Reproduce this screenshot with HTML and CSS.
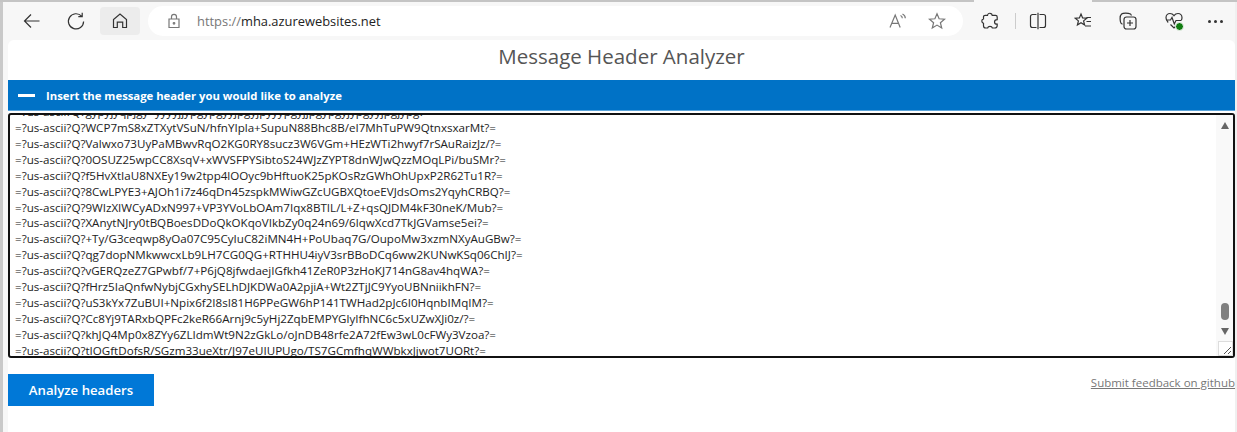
FILE: index.html
```html
<!DOCTYPE html>
<html lang="en">
<head>
<meta charset="utf-8">
<title>Message Header Analyzer</title>
<link rel="stylesheet" href="styles.css">
</head>
<body>
<div class="tabstrip"><span class="tab-gap"></span></div>
<div class="window">
  <header class="toolbar">
    <button class="tool back"><svg width="20" height="20" viewBox="0 0 20 20"><path d="M17.500 10H2.500M9 3.500 2.500 10 9 16.500"/></svg></button>
    <button class="tool reload"><svg width="20" height="20" viewBox="0 0 20 20"><path d="M15.600 5.200A7.600 7.600 0 1 0 17.600 10.500M16.200 1.800v3.900h-3.900"/></svg></button>
    <button class="tool home"><svg width="18" height="18" viewBox="0 0 18 18"><path d="M2.500 15.500V7.600L9 2l6.500 5.600v7.900h-3.800v-5.300H6.300v5.300z"/></svg></button>
    <div class="address">
      <svg class="lock" width="14" height="16" viewBox="0 0 14 16"><path d="M2 6h10v8.500H2zM4.500 6V3.800a2.500 2.500 0 0 1 5 0V6"/><circle cx="7" cy="10.300" r=".8"/></svg>
      <span class="url"><span class="scheme">https://</span>mha.azurewebsites.net</span>
      <svg class="read" width="18" height="16" viewBox="0 0 18 16"><path d="M1 14.500 6.200 2l5 12.500M2.800 10.300h7M11.500 2.500c1.100.5 1.800 1.500 1.800 2.700M13.500 1c1.700.9 2.800 2.400 2.800 4.300"/></svg>
      <svg class="star" width="18" height="18" viewBox="0 0 18 18"><path d="M9 1.800 11.100 6.800l5.400.4-4.100 3.500 1.300 5.300L9 13.100 4.300 16l1.300-5.300L1.500 7.200l5.400-.4z"/></svg>
    </div>
    <div class="tools-right">
      <svg class="ext" width="18" height="18" viewBox="0 0 18 18"><path d="M6.500 3.300C6.700 1.800 8 1 9.300 1.300c1 .2 1.800 1 1.900 2h3.300c1 0 1.700.7 1.700 1.700v2.600c-1.600 0-2.700 1-2.700 2.300s1.100 2.300 2.700 2.300v1.300c0 1.400-1 2.500-2.500 2.500h-2.300c-.3-1.100-1.200-1.700-2.400-1.700s-2.100.6-2.400 1.700H4.800c-1.400 0-2.300-1-2.300-2.300v-2.300C1.400 11.100.8 10.200.8 9.100s.7-2 1.700-2.200V5c0-1 .7-1.700 1.700-1.700z"/></svg>
      <span class="divider"></span>
      <svg class="split" width="18" height="18" viewBox="0 0 18 18"><path d="M7.500 2.500h-4A2 2 0 0 0 1.500 4.500v9a2 2 0 0 0 2 2h4M10.500 2.500h4a2 2 0 0 1 2 2v9a2 2 0 0 1-2 2h-4M9 .8v16.400"/></svg>
      <svg class="favs" width="18" height="18" viewBox="0 0 18 18"><path d="M7 2 8.600 5.900l4.200.3-3.200 2.700 1 4.100L7 10.800 3.400 13l1-4.100L1.200 6.200l4.200-.3zM12.500 5.500h4.500M12.500 9.500h4.500M11 14h6"/></svg>
      <svg class="colls" width="18" height="18" viewBox="0 0 18 18"><path d="M12.500 3.500 11.500 2C9 .8 4 .8 2.600 2 1 3.500 1 7.500 1.500 10c.2 1 .8 1.800 2 2.300"/><rect x="5" y="5" width="12" height="12" rx="2.500"/><path d="M11 8v6M8 11h6"/></svg>
      <span class="health">
        <svg width="18" height="18" viewBox="0 0 18 18"><path d="M3.200 10.500C1.800 9 1 7.400 1 5.700 1 3.300 2.800 1.500 5 1.500c1.700 0 3 .8 4 2.200 1-1.400 2.300-2.200 4-2.200 2.200 0 4 1.800 4 4.200 0 1-.3 1.900-.8 2.800M1 8h4.500l1.500-2.500 2.300 6.500L11 8.500h5M5.500 12.500 9 16l1.500-1.500"/></svg>
        <i class="health-dot"></i>
      </span>
      <span class="more"><i></i><i></i><i></i></span>
    </div>
  </header>
  <main class="page">
    <h1 class="title">Message Header Analyzer</h1>
    <div class="bar"><span class="minus"></span><span class="bar-text">Insert the message header you would like to analyze</span></div>
    <div class="input">
      <div class="viewport">
        <div class="lines">
          <div>=?us-ascii?Q?gypyjyqpjgy+yyyyjjypgypgyyjpgyjpyyypgyjjpgypgyjypgyyjpgjypg?=</div>
          <div>=?us-ascii?Q?WCP7mS8xZTXytVSuN/hfnYIpla+SupuN88Bhc8B/eI7MhTuPW9QtnxsxarMt?=</div>
          <div>=?us-ascii?Q?Valwxo73UyPaMBwvRqO2KG0RY8sucz3W6VGm+HEzWTi2hwyf7rSAuRaizJz/?=</div>
          <div>=?us-ascii?Q?0OSUZ25wpCC8XsqV+xWVSFPYSibtoS24WJzZYPT8dnWJwQzzMOqLPi/buSMr?=</div>
          <div>=?us-ascii?Q?f5HvXtIaU8NXEy19w2tpp4lOOyc9bHftuoK25pKOsRzGWhOhUpxP2R62Tu1R?=</div>
          <div>=?us-ascii?Q?8CwLPYE3+AJOh1i7z46qDn45zspkMWiwGZcUGBXQtoeEVJdsOms2YqyhCRBQ?=</div>
          <div>=?us-ascii?Q?9WIzXIWCyADxN997+VP3YVoLbOAm7Iqx8BTIL/L+Z+qsQJDM4kF30neK/Mub?=</div>
          <div>=?us-ascii?Q?XAnytNJry0tBQBoesDDoQkOKqoVIkbZy0q24n69/6lqwXcd7TkJGVamse5ei?=</div>
          <div>=?us-ascii?Q?+Ty/G3ceqwp8yOa07C95CyIuC82iMN4H+PoUbaq7G/OupoMw3xzmNXyAuGBw?=</div>
          <div>=?us-ascii?Q?qg7dopNMkwwcxLb9LH7CG0QG+RTHHU4iyV3srBBoDCq6ww2KUNwKSq06ChIJ?=</div>
          <div>=?us-ascii?Q?vGERQzeZ7GPwbf/7+P6jQ8jfwdaejIGfkh41ZeR0P3zHoKJ714nG8av4hqWA?=</div>
          <div>=?us-ascii?Q?fHrz5IaQnfwNybjCGxhySELhDJKDWa0A2pjiA+Wt2ZTjJC9YyoUBNniikhFN?=</div>
          <div>=?us-ascii?Q?uS3kYx7ZuBUI+Npix6f2I8sI81H6PPeGW6hP141TWHad2pJc6I0HqnbIMqIM?=</div>
          <div>=?us-ascii?Q?Cc8Yj9TARxbQPFc2keR66Arnj9c5yHj2ZqbEMPYGlyIfhNC6c5xUZwXJi0z/?=</div>
          <div>=?us-ascii?Q?khJQ4Mp0x8ZYy6ZLIdmWt9N2zGkLo/oJnDB48rfe2A72fEw3wL0cFWy3Vzoa?=</div>
          <div>=?us-ascii?Q?tIOGftDofsR/SGzm33ueXtr/J97eUIUPUgo/TS7GCmfhqWWbkxJjwot7UORt?=</div>
        </div>
      </div>
      <div class="scrollbar">
        <i class="arrow up"></i>
        <span class="track"><i class="thumb"></i></span>
        <i class="arrow down"></i>
        <span class="grip"><svg width="13" height="13" viewBox="0 0 13 13"><path d="M12 5 5 12M12 9 9 12"/></svg></span>
      </div>
    </div>
    <div class="actions">
      <button class="analyze">Analyze headers</button>
      <a class="feedback" href="#">Submit feedback on github</a>
    </div>
  </main>
</div>
</body>
</html>
```
FILE: styles.css
```css
* { box-sizing: border-box; }
html, body { margin: 0; height: 100%; overflow: hidden; }
body { background: #f7f7f7; font-family: "Open Sans", "Noto Sans", sans-serif; display: flex; flex-direction: column; width: 1237px; height: 432px; }
.tabstrip { height: 2px; background: #c4c4c4; display: flex; justify-content: flex-end; flex: none; }
.tab-gap { width: 118px; margin-right: 145px; background: #f7f7f7; }
.window { flex: 1; display: flex; flex-direction: column; min-height: 0; border-left: 3px solid #c9c9c9; border-right: 2px solid #f0f0f0; }
.toolbar { height: 38px; flex: none; display: flex; align-items: center; position: relative; }
.tool { border: 0; background: none; padding: 0; display: flex; align-items: center; justify-content: center; border-radius: 4px; }
.tool svg, .tools-right svg, .address svg { fill: none; stroke: #333; stroke-width: 1.2; }
.tool.back { width: 20px; height: 20px; margin-left: 19px; }
.tool.reload { width: 20px; height: 20px; margin-left: 24px; }
.tool.home { width: 40px; height: 28px; margin-left: 14px; background: #ececec; }
.address { width: 815px; height: 30px; margin-left: 8px; background: #fff; border-radius: 15px; display: flex; align-items: center; padding-left: 19px; }
.address .lock, .address .read, .address .star { stroke: #777; }
.url { margin-left: 16px; font-size: 12.9px; color: #222; }
.scheme { color: #777; }
.read { margin-left: auto; }
.star { margin-left: 21px; margin-right: 17px; }
.tools-right { display: flex; align-items: center; margin-left: 18px; flex: 1; }
.divider { width: 1px; height: 16px; background: #ccc; margin: 0 13px 0 16px; }
.favs { margin-left: 27px; }
.colls { margin-left: 27px; }
.health { margin-left: 28px; position: relative; display: flex; }
.health-dot { position: absolute; right: -1px; bottom: -1px; width: 7px; height: 7px; border-radius: 50%; background: #107c10; border: 1px solid #f7f7f7; box-sizing: content-box; }
.more { display: flex; gap: 3px; margin-left: 25px; }
.more i { width: 3px; height: 3px; border-radius: 50%; background: #333; }
.page { flex: 1; min-height: 0; margin-left: 5px; background: #fff; border-radius: 6px 6px 0 0; display: flex; flex-direction: column; }
.title { margin: 0; height: 40px; font-size: 20.5px; font-weight: 400; color: #555; text-align: center; line-height: 33px; }
.bar { height: 31px; background: #0072c6; border-bottom: 1px solid #5aa5dc; display: flex; align-items: center; color: #fff; flex: none; }
.minus { width: 17px; height: 3px; background: #fff; margin-left: 10px; }
.bar-text { margin-left: 11px; font-size: 11.3px; font-weight: 700; }
.input { margin-top: 2px; height: 245px; flex: none; border: 2px solid #111; border-radius: 3px; display: flex; overflow: hidden; }
.viewport { flex: 1; min-width: 0; overflow: hidden; padding-left: 5px; }
.lines { font-size: 11.6px; line-height: 15.92px; color: #222; margin-top: -11px; }
.lines div { white-space: pre; }
.scrollbar { width: 17px; flex: none; background: #f9f9f9; display: flex; flex-direction: column; align-items: center; }
.arrow { width: 0; height: 0; border-left: 4px solid transparent; border-right: 4px solid transparent; flex: none; }
.arrow.up { border-bottom: 7px solid #666; margin-top: 7px; }
.arrow.down { border-top: 7px solid #666; margin-top: 8px; }
.track { flex: 1; display: flex; flex-direction: column; justify-content: flex-end; }
.thumb { display: block; width: 8px; height: 17px; background: #808080; border-radius: 4px; }
.grip { width: 15px; height: 15px; margin-top: 6px; border: 1px solid #ddd; background: #fff; display: flex; align-self: flex-end; }
.grip svg { fill: none; stroke: #555; stroke-width: 1; }
.actions { display: flex; justify-content: space-between; padding-top: 16px; }
.analyze { width: 146px; height: 32px; border: 0; background: #0078d7; color: #fff; font: 600 13.2px "Open Sans", sans-serif; }
.feedback { font-size: 11.5px; color: #777; margin-top: 1px; }
```
